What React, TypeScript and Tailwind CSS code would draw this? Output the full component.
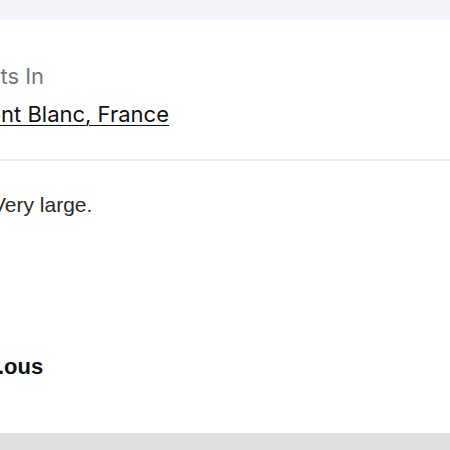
export default function App() {
  return (
    <div className="h-[450px] w-[450px] overflow-hidden bg-[#e0e0e2]">
      <div className="h-5 bg-[#f3f4f8]" />

      {/* Card, cropped on the left */}
      <div className="flex h-[413px] flex-col overflow-hidden bg-white pt-[41px]">
        <div className="flex flex-col font-['Inter',sans-serif]">
          <p className="-ml-[42px] whitespace-nowrap text-[22px] leading-[30px] text-[#767676]">
            Starts In
          </p>
          <a
            href="#"
            className="mt-2 -ml-[32px] whitespace-nowrap text-[22px] leading-[30px] text-[#111] underline underline-offset-[3px] decoration-1"
          >
            Mont Blanc, France
          </a>
        </div>

        <div className="mt-[30px] h-[2px] bg-[#ebebeb]" />

        <div className="flex flex-col font-['Liberation_Sans',Arial,sans-serif]">
          <p className="mt-[30px] -ml-[8px] whitespace-nowrap text-[21px] leading-[28px] text-[#2a2a2a]">
            Very large.
          </p>
          <p className="mt-[133px] -ml-[2px] whitespace-nowrap text-[22px] font-bold leading-[30px] text-[#111]">
            .ous
          </p>
        </div>
      </div>
    </div>
  )
}
